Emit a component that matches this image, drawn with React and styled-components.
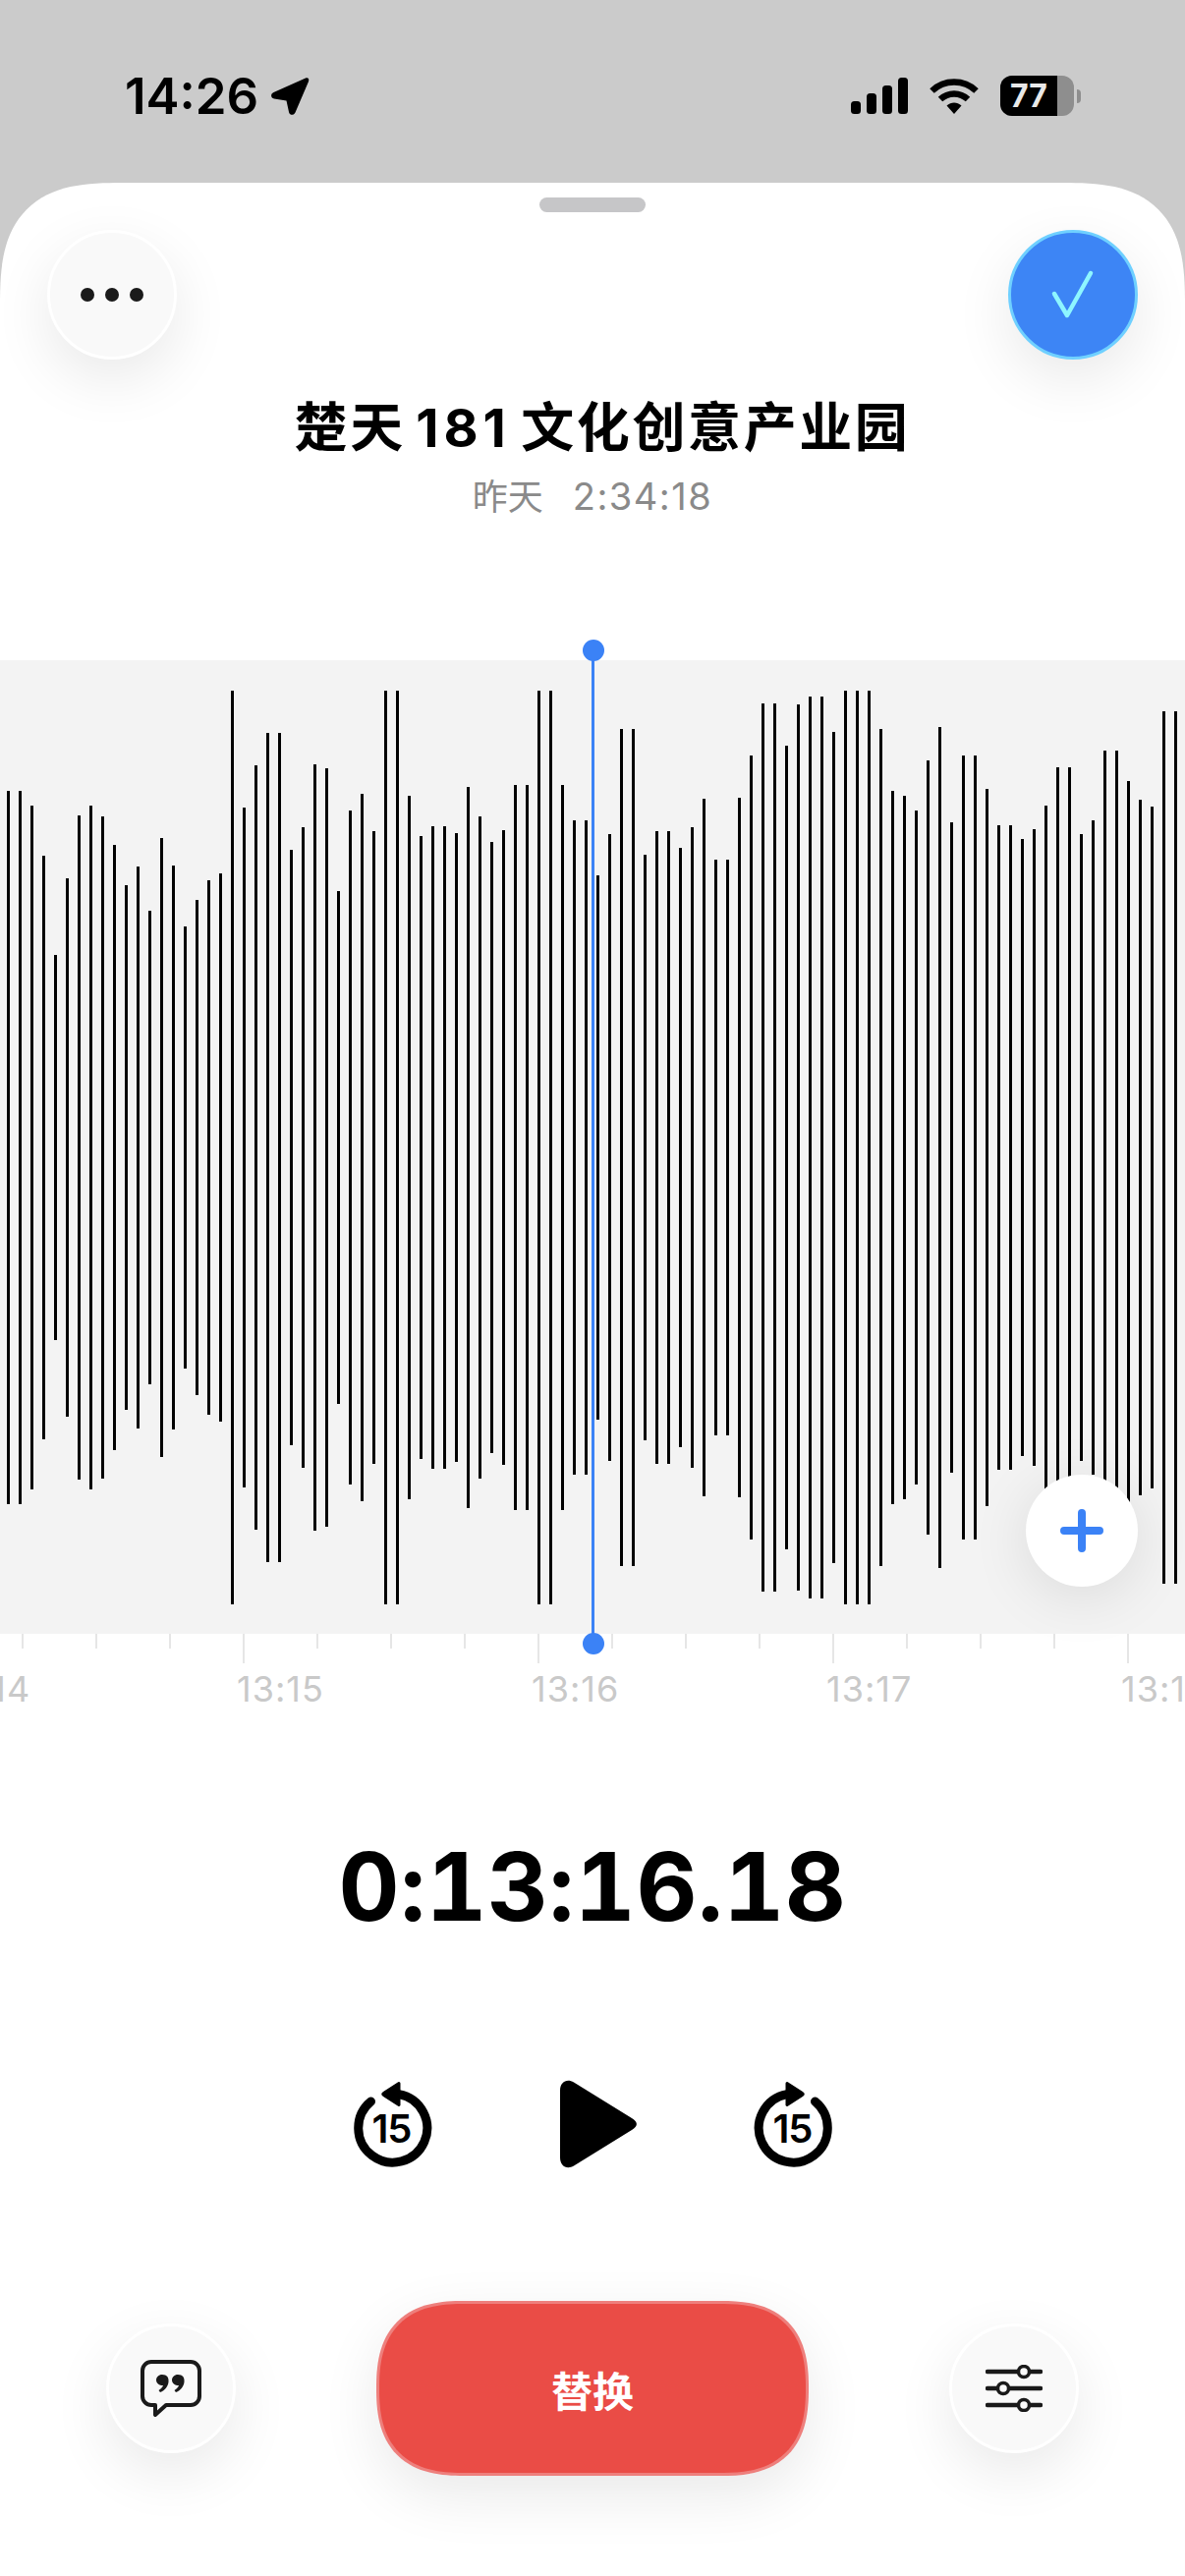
import React from "react"
import styled, { createGlobalStyle } from "styled-components"

const SANS = `Inter, "Noto Sans CJK SC", "Liberation Sans", sans-serif`

const GlobalStyle = createGlobalStyle`
html, body {
  margin: 0;
  padding: 0;
  background: #cbcbcb;
  font-family: ${SANS};
}
`;

const Screen = styled.div`
width: 1206px;
height: 2622px;
overflow: hidden;
display: flex;
flex-direction: column;
background-color: #cbcbcb;
`;

const StatusBar = styled.div`
height: 186px;
flex: none;
display: flex;
justify-content: space-between;
align-items: flex-start;
padding: 72px 106px 0 127px;
box-sizing: border-box;
color: #000;
`;

const Clock = styled.div`
display: flex;
align-items: center;
gap: 12px;
font-size: 51px;
line-height: 52px;
font-weight: 600;
`;

const StatusIcons = styled.div`
display: flex;
align-items: center;
gap: 22px;
padding-top: 5px;
`;

const BatteryWrap = styled.div`
display: flex;
align-items: center;
gap: 3px;
`;

const Battery = styled.div`
width: 75px;
height: 41px;
border-radius: 12px;
overflow: hidden;
display: flex;
background-color: #8e8e8e;
`;

const BatteryFill = styled.div`
width: 58px;
background-color: #000;
color: #e8e8e8;
font-size: 32px;
font-weight: 700;
line-height: 41px;
text-align: center;
`;

const BatteryNub = styled.div`
width: 4px;
height: 14px;
border-radius: 0 7px 7px 0;
background-color: #8e8e8e;
`;

const Sheet = styled.div`
flex: 1;
position: relative;
display: flex;
flex-direction: column;
background-color: #fff;
border-radius: 125px 125px 0 0;
corner-shape: superellipse(1.5);
padding-top: 15px;
`;

const Handle = styled.div`
width: 108px;
height: 15px;
border-radius: 8px;
background-color: #c6c6c8;
align-self: center;
`;

const HeaderRow = styled.div`
display: flex;
justify-content: space-between;
padding: 18px 48px 0;
`;

const RoundButton = styled.div`
width: ${p => p.$size || 132}px;
height: ${p => p.$size || 132}px;
box-sizing: border-box;
border-radius: 50%;
display: flex;
align-items: center;
justify-content: center;
flex: none;
background-color: ${p => p.$bg || "#f9f9f9"};
border: 3px solid ${p => p.$ring || "#fff"};
box-shadow: 0 20px 60px rgba(0, 0, 0, 0.09);
`;

const Dots = styled.div`
display: flex;
gap: 11px;
`;

const Dot = styled.div`
width: 14px;
height: 14px;
border-radius: 50%;
background-color: #1a1a1a;
`;

const TitleBlock = styled.div`
display: flex;
flex-direction: column;
align-items: center;
margin-top: 38px;
`;

const Title = styled.h1`
margin: 0 0 0 20px;
font-size: 54px;
line-height: 64px;
font-weight: 700;
color: #000;
letter-spacing: 2.6px;
word-spacing: -5px;
`;

const TitleNumber = styled.span`
letter-spacing: 5px;
`;

const Subtitle = styled.div`
display: flex;
align-items: baseline;
gap: 30px;
margin-top: 15px;
font-size: 36px;
line-height: 44px;
color: #8a8a8a;
`;

const SubtitleTime = styled.span`
font-size: 38px;
letter-spacing: 1.5px;
`;

const Timeline = styled.div`
position: relative;
margin-top: 144px;
`;

const WavePanel = styled.div`
height: 991px;
background-color: #f3f3f3;
overflow: hidden;
display: flex;
align-items: center;
gap: 9px;
padding-left: 7px;
`;

const Bar = styled.div`
width: 3px;
flex: none;
background-color: #000;
`;

const Playhead = styled.div`
position: absolute;
left: 602px;
top: -11px;
width: 3px;
height: 1012px;
background-color: #3b82f6;

&::before,
&::after {
  content: "";
  position: absolute;
  left: -9.5px;
  width: 22px;
  height: 22px;
  border-radius: 50%;
  background-color: #3b82f6;
}
&::before { top: -10px; }
&::after { bottom: -11px; }
`;

const AddButton = styled(RoundButton)`
position: absolute;
right: 48px;
top: 829px;
border: none;
background-color: #fff;
box-shadow: 0 10px 60px rgba(0, 0, 0, 0.1);
`;

const Ruler = styled.div`
display: flex;
margin-left: -53px;
width: 1500px;
`;

const RulerCell = styled.div`
width: 300px;
flex: none;
`;

const TickRow = styled.div`
display: flex;
align-items: flex-start;
gap: 73px;
height: 30px;
`;

const Tick = styled.div`
width: 2px;
flex: none;
height: ${p => (p.$long ? 30 : 15)}px;
background-color: #e6e6e6;
`;

const RulerLabel = styled.div`
margin: 6px 0 0 -6px;
font-size: 36px;
line-height: 40px;
letter-spacing: 1px;
color: #c9c9c9;
`;

const Elapsed = styled.div`
margin-top: 121px;
text-align: center;
font-size: 96px;
line-height: 120px;
font-weight: 700;
font-variant-numeric: tabular-nums;
letter-spacing: 0.5px;
color: #000;
`;

const Transport = styled.div`
display: flex;
align-items: center;
justify-content: center;
gap: 117px;
margin-top: 137px;
`;

const BackSlot = styled.div`
display: flex;
margin-right: 13px;
`;

const ActionRow = styled.div`
display: flex;
align-items: center;
justify-content: space-between;
padding: 0 108px;
margin-top: 135px;
`;

const ReplaceButton = styled.div`
width: 440px;
height: 178px;
box-sizing: border-box;
border-radius: 89px;
corner-shape: superellipse(1.35);
border: 3px solid #ee7f7c;
background-color: #ea4c46;
color: #fff;
font-size: 42px;
font-weight: 700;
display: flex;
align-items: center;
justify-content: center;
box-shadow: 0 20px 60px rgba(0, 0, 0, 0.09);
`;

const WAVE = [495, 495, 540, 693, 996, 762, 570, 540, 573, 660, 783, 726, 861, 639, 723, 909, 828, 768, 747, 189, 546, 417, 318, 318, 675, 606, 414, 426, 801, 555, 504, 618, 189, 189, 510, 633, 603, 603, 624, 483, 573, 651, 615, 477, 477, 189, 189, 477, 585, 585, 753, 627, 306, 306, 690, 618, 618, 669, 606, 519, 705, 705, 516, 387, 228, 228, 357, 231, 207, 207, 315, 189, 189, 189, 306, 495, 510, 555, 402, 300, 591, 387, 387, 489, 600, 600, 642, 612, 540, 423, 423, 627, 585, 372, 372, 465, 522, 543, 252, 252]

// zoom crop values (3x, from y 640) -> full bar height around the panel centre
const barHeight = v => 2 * (1168 - (640 + v / 3))

const RULER = ["13:14", "13:15", "13:16", "13:17", "13:18"]

const SignalIcon = () => (
  <svg width="58" height="37" viewBox="0 0 58 37" fill="#000">
    <rect x="0" y="24" width="10" height="13" rx="3.5" />
    <rect x="16" y="16" width="10" height="21" rx="3.5" />
    <rect x="32" y="8" width="10" height="29" rx="3.5" />
    <rect x="48" y="0" width="10" height="37" rx="3.5" />
  </svg>
)

const WifiIcon = () => (
  <svg width="50" height="37" viewBox="0 0 50 37" fill="none" stroke="#000">
    <path d="M2.5 13.5C15 1.5 35 1.5 47.5 13.5" strokeWidth="6.5" />
    <path d="M11 22C19 14.5 31 14.5 39 22" strokeWidth="6.5" />
    <path d="M17.5 28.5L25 37L32.5 28.5C28 24.5 22 24.5 17.5 28.5Z" fill="#000" stroke="none" />
  </svg>
)

const ArrowIcon = () => (
  <svg width="40" height="40" viewBox="0 0 40 40" fill="#000">
    <path d="M36 1.5C38.5 .5 40 2.5 39 5L25.5 36.5C24 39.8 19.5 39.5 19 36L16.5 24.5L4 22.5C.5 21.8 0 17.5 3.5 16Z" />
  </svg>
)

const CheckIcon = () => (
  <svg width="62" height="62" viewBox="0 0 62 62" fill="none" stroke="#8ef6ff" strokeWidth="4.5" strokeLinecap="round" strokeLinejoin="round">
    <path d="M12 30L25 52L49 9" />
  </svg>
)

const PlusIcon = () => (
  <svg width="44" height="44" viewBox="0 0 44 44" fill="none" stroke="#3b82f6" strokeWidth="8" strokeLinecap="round">
    <path d="M22 4V40M4 22H40" />
  </svg>
)

const SkipIcon = ({ forward }) => (
  <svg width="80" height="87" viewBox="0 0 80 87" fill="none">
    <g transform={forward ? "translate(80 0) scale(-1 1)" : undefined}>
      <path d="M17.5 20A35 35 0 1 0 46 12.6" stroke="#000" strokeWidth="9" strokeLinecap="round" />
      <path d="M46 1.5L30.5 11.5C29.5 12 29.5 13 30.5 13.5L46 23.5Z" fill="#000" stroke="#000" strokeWidth="3" strokeLinejoin="round" />
    </g>
    <text x={forward ? 39.5 : 38.5} y="62" textAnchor="middle" fontFamily="Inter, sans-serif" fontSize="40" fontWeight="600" letterSpacing="-1" fill="#000">15</text>
  </svg>
)

const PlayIcon = () => (
  <svg width="80" height="90" viewBox="0 0 80 90" fill="#000">
    <path d="M0 11C0 2 7 -1.5 14 2.5L73 39C79.5 43 79.5 47 73 51L14 87.5C7 91.5 0 88 0 79Z" />
  </svg>
)

const ChatIcon = () => (
  <svg width="62" height="58" viewBox="0 0 62 58" fill="none">
    <path d="M11 2H51C56 2 60 6 60 11V37C60 42 56 46 51 46H26L15 56V46H11C6 46 2 42 2 37V11C2 6 6 2 11 2Z" stroke="#1a1a1a" strokeWidth="4" strokeLinejoin="round" />
    <path d="M22 15C27 15 29 18 28.5 22.5C28 27 25 31 20 33L18.5 31C21 29.5 22.5 27.5 23 26C19 26 16 24 16 20.5C16 17.5 18.5 15 22 15Z" fill="#1a1a1a" />
    <path d="M38 15C43 15 45 18 44.5 22.5C44 27 41 31 36 33L34.5 31C37 29.5 38.5 27.5 39 26C35 26 32 24 32 20.5C32 17.5 34.5 15 38 15Z" fill="#1a1a1a" />
  </svg>
)

const SlidersIcon = () => (
  <svg width="58" height="48" viewBox="0 0 58 48" fill="none" stroke="#1a1a1a">
    <g strokeWidth="4.5" strokeLinecap="round">
      <path d="M2 7H56M2 24H56M2 41H56" />
    </g>
    <g fill="#f9f9f9" strokeWidth="3.5">
      <circle cx="39" cy="7" r="5.5" />
      <circle cx="18" cy="24" r="5.5" />
      <circle cx="39" cy="41" r="5.5" />
    </g>
  </svg>
)

const App = () => {
  return (
    <Screen>
      <GlobalStyle />
      <StatusBar>
        <Clock>
          14:26
          <ArrowIcon />
        </Clock>
        <StatusIcons>
          <SignalIcon />
          <WifiIcon />
          <BatteryWrap>
            <Battery>
              <BatteryFill>77</BatteryFill>
            </Battery>
            <BatteryNub />
          </BatteryWrap>
        </StatusIcons>
      </StatusBar>
      <Sheet>
        <Handle />
        <HeaderRow>
          <RoundButton>
            <Dots><Dot /><Dot /><Dot /></Dots>
          </RoundButton>
          <RoundButton $bg="#3d85f5" $ring="#6fd0ff">
            <CheckIcon />
          </RoundButton>
        </HeaderRow>
        <TitleBlock>
          <Title>楚天 <TitleNumber>181</TitleNumber> 文化创意产业园</Title>
          <Subtitle>
            <span>昨天</span>
            <SubtitleTime>2:34:18</SubtitleTime>
          </Subtitle>
        </TitleBlock>
        <Timeline>
          <WavePanel>
            {WAVE.map((v, i) => (
              <Bar key={i} style={{ height: barHeight(v) }} />
            ))}
          </WavePanel>
          <Ruler>
            {RULER.map(label => (
              <RulerCell key={label}>
                <TickRow>
                  <Tick $long />
                  <Tick />
                  <Tick />
                  <Tick />
                </TickRow>
                <RulerLabel>{label}</RulerLabel>
              </RulerCell>
            ))}
          </Ruler>
          <Playhead />
          <AddButton $size={114}><PlusIcon /></AddButton>
        </Timeline>
        <Elapsed>0:13:16.18</Elapsed>
        <Transport>
          <BackSlot><SkipIcon /></BackSlot>
          <PlayIcon />
          <SkipIcon forward />
        </Transport>
        <ActionRow>
          <RoundButton><ChatIcon /></RoundButton>
          <ReplaceButton>替换</ReplaceButton>
          <RoundButton><SlidersIcon /></RoundButton>
        </ActionRow>
      </Sheet>
    </Screen>
  )
}

export default App;
